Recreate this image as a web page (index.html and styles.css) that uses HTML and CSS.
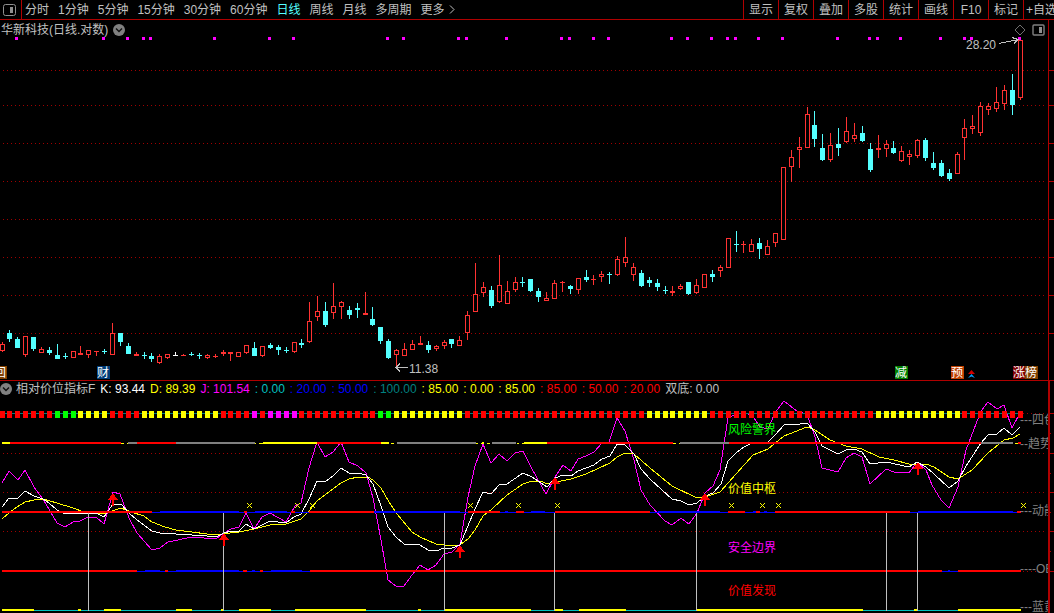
FILE: index.html
```html
<!DOCTYPE html>
<html lang="zh-CN">
<head>
    <meta charset="UTF-8">
    <meta name="viewport" content="width=device-width, initial-scale=1.0">
    <title>华新科技 日线</title>
    <link rel="stylesheet" href="styles.css">
</head>
<body>
    <header class="toolbar">
        <button class="layout-btn" aria-label="布局">
            <svg width="13" height="12" viewBox="0 0 13 12"><rect x="0.5" y="0.5" width="12" height="11" rx="2" fill="none" stroke="#909090"/><rect x="7" y="3" width="3" height="6" fill="#909090"/></svg>
        </button>
        <nav class="periods">
            <button>分时</button>
            <button>1分钟</button>
            <button>5分钟</button>
            <button>15分钟</button>
            <button>30分钟</button>
            <button>60分钟</button>
            <button class="active">日线</button>
            <button>周线</button>
            <button>月线</button>
            <button>多周期</button>
            <button class="more">更多
                <svg width="6" height="9" viewBox="0 0 6 9"><path d="M1 0.5L5 4.5L1 8.5" fill="none" stroke="#c0c0c0"/></svg>
            </button>
        </nav>
        <nav class="tools">
            <button>显示</button>
            <button>复权</button>
            <button>叠加</button>
            <button>多股</button>
            <button>统计</button>
            <button>画线</button>
            <button>F10</button>
            <button>标记</button>
            <button class="fav">+自选</button>
        </nav>
    </header>

    <main>
        <section class="panel price">
            <div class="panel-title over">
                <span>华新科技(日线.对数)</span>
                <button class="drop" aria-label="展开">
                    <svg width="12" height="12" viewBox="0 0 12 12"><circle cx="6" cy="6" r="6" fill="#808080"/><path d="M3 4.5L6 7.5L9 4.5" fill="none" stroke="#101010" stroke-width="1.4"/></svg>
                </button>
                <div class="corner">
                    <svg width="12" height="12" viewBox="0 0 12 12"><path d="M6 1L11 6L6 11L1 6Z" fill="none" stroke="#707070"/></svg>
                    <svg width="13" height="12" viewBox="0 0 13 12"><rect x="1" y="1" width="11" height="10" rx="1" fill="none" stroke="#808080" stroke-width="1.4"/><rect x="7" y="3" width="3" height="6" fill="#909090"/></svg>
                </div>
            </div>
            <svg class="chart" id="price" viewBox="0 20 1054 360"></svg>
        </section>

        <section class="panel indicator">
            <div class="panel-title">
                <button class="drop" aria-label="展开">
                    <svg width="12" height="12" viewBox="0 0 12 12"><circle cx="6" cy="6" r="6" fill="#808080"/><path d="M3 4.5L6 7.5L9 4.5" fill="none" stroke="#101010" stroke-width="1.4"/></svg>
                </button>
                <span>相对价位指标F</span>
                <span class="white">K: 93.44</span>
                <span class="yellow">D: 89.39</span>
                <span class="magenta">J: 101.54</span>
                <span class="cyan">: 0.00</span>
                <span class="blue">: 20.00</span>
                <span class="blue">: 50.00</span>
                <span class="teal">: 100.00</span>
                <span class="yellow">: 85.00</span>
                <span class="yellow">: 0.00</span>
                <span class="yellow">: 85.00</span>
                <span class="red">: 85.00</span>
                <span class="red">: 50.00</span>
                <span class="red">: 20.00</span>
                <span>双底: 0.00</span>
            </div>
            <svg class="chart" id="indicator" viewBox="0 397 1054 216"></svg>
        </section>
    </main>
    <script src="chart.js"></script>
</body>
</html>
```
FILE: styles.css
```css
body {
    margin: 0;
    background: #000;
    color: #c0c0c0;
    font-family: "Liberation Sans", "Noto Sans CJK SC", sans-serif;
    font-size: 12px;
    line-height: 16px;
    overflow: hidden;
}
button {
    background: none;
    border: none;
    padding: 0;
    color: inherit;
    font: inherit;
    white-space: nowrap;
    cursor: pointer;
}
button:hover {
    color: #fff;
}
.toolbar {
    display: flex;
    height: 19px;
    border-bottom: 1px solid #b00000;
}
.toolbar svg, .panel-title svg {
    display: block;
}
.layout-btn {
    flex: none;
    width: 22px;
    padding-left: 3px;
    border-right: 1px solid #b00000;
}
.periods {
    display: flex;
    gap: 9px;
    padding-left: 3px;
}
.periods .active {
    color: #54ffff;
}
.more {
    display: flex;
    align-items: center;
    gap: 4px;
}
.tools {
    display: flex;
    margin-left: auto;
}
.tools button {
    box-sizing: border-box;
    width: 35px;
    border-left: 1px solid #b00000;
}
.tools .fav {
    width: 31px;
    padding-left: 2px;
    overflow: hidden;
    text-align: left;
}
.panel {
    position: relative;
}
.price {
    border-bottom: 1px solid #b00000;
}
.chart {
    display: block;
    width: 100%;
    height: auto;
}
.indicator .chart {
    overflow: visible;
}
.panel-title {
    display: flex;
    align-items: center;
    gap: 5px;
    height: 16px;
    white-space: nowrap;
}
.panel-title.over {
    position: absolute;
    top: 2px;
    left: 1px;
    right: 9px;
}
.indicator .drop {
    margin-right: -1px;
}
.corner {
    display: flex;
    gap: 6px;
    margin-left: auto;
}
.white { color: #fff; }
.yellow { color: #ff0; }
.magenta { color: #f0f; }
.cyan { color: #00c0c0; }
.blue { color: #00f; }
.teal { color: #008080; }
.red { color: #f00; }

.crisp {
    shape-rendering: crispEdges;
}
.grid {
    stroke: #a00000;
    stroke-dasharray: 1 3;
}
.curve {
    fill: none;
    stroke-width: 1;
}
.chart text {
    fill: #c0c0c0;
    font-size: 12px;
}
.chart text.badge {
    fill: #fff;
}
.chart text.dim {
    fill: #808080;
}
.chart text.risk { fill: #0f0; }
.chart text.middle { fill: #ff0; }
.chart text.safe { fill: #f0f; }
.chart text.value { fill: #f00; }
```
FILE: chart.js
```javascript
const UP = '#ff3232';
const DOWN = '#54ffff';
const COLORS = { r: '#ff0000', y: '#ffff00', g: '#00ff00', m: '#ff00ff', b: '#0000ff', s: '#808080', c: '#00c0c0' };

// type, high, body top, body bottom, low (one bar per trading day)
const bars = `r342 344 350 351|c330 333 338 341|c337 339 347 347|r336 336 354 356|c337 337 348 350|r347 349 352 352
c347 350 352 354|c344 355 358 358|c353 356 356 358|r351 351 357 357|r346 353 354 354|r350 350 354 357|r351 351 351 355
c349 351 351 353|r323 333 354 354|c333 333 341 345|c343 346 353 353|r352 354 355 355|c352 355 355 358|c353 356 358 361
r354 356 362 363|r354 354 357 358|w352 355 355 355|r354 355 355 355|c352 354 354 355|c353 355 355 358|r354 355 357 358
r354 356 356 357|r350 352 353 355|r352 352 353 360|r352 352 356 356|r345 345 352 353|c342 348 355 355|r346 346 355 356
c343 345 347 348|c345 347 349 354|c347 350 350 352|r342 342 351 352|c339 343 344 347|r302 321 341 342|r296 311 316 320
c302 311 324 326|r283 306 312 318|r301 302 306 318|c306 310 314 318|c303 308 309 317|r292 313 314 314|c307 319 324 325
c327 327 340 343|c339 341 357 358|r349 350 354 366|r343 349 355 355|r340 344 349 349|r336 343 344 344|c341 345 349 352
r345 346 348 350|r340 342 345 348|c339 339 343 347|r336 340 345 345|r311 315 332 339|r263 294 311 311|r282 287 292 296
c286 290 305 307|r255 285 301 302|r281 291 303 303|r277 282 289 291|c277 282 282 286|c279 279 290 291|c288 291 296 301
r292 298 300 300|r280 283 298 298|r281 282 282 291|c285 286 288 293|r278 278 289 293|c270 277 279 281|r275 279 279 284
r271 274 276 281|c272 274 274 283|r256 259 274 275|r237 257 262 266|r263 267 274 280|c270 273 285 286|c277 280 282 286
c279 283 286 290|c286 290 290 293|r286 291 292 295|r284 286 288 289|c282 282 293 294|r279 285 292 293|r274 274 287 287
c270 274 276 281|r265 267 270 276|r238 238 267 267|c231 244 244 251|r241 244 244 252|r239 244 251 251|c238 243 248 258
r240 246 254 254|r233 233 242 246|r167 167 239 239|r150 157 166 181|r137 147 149 167|r107 114 147 147|c111 125 138 146
c134 148 159 160|r133 145 159 161|c128 144 147 155|r117 131 141 142|r123 135 138 141|c126 133 140 141|c143 149 169 171
r135 148 149 157|r140 144 148 156|c141 148 152 153|r146 151 160 161|r150 154 156 164|r139 140 155 157|c138 140 157 160
c152 163 167 169|c160 163 175 176|c169 173 178 180|r152 154 173 173|r119 128 137 159|r115 126 128 133|r102 106 132 135
r103 106 109 114|r87 102 108 111|r85 90 103 109|c74 90 104 114|r40 40 97 99`.split(/[|\n]/);

const signals = [16, 103, 127, 143, 150, 214, 269, 293, 387, 403, 458, 466, 506, 561, 569, 593, 608, 671, 687,
    711, 727, 735, 758, 782, 837, 869, 877, 900, 940, 964, 971, 1019];

// colour and how many bars in a row carry it
const blocks = 'r7 g3 y4 r4 y10 r4 m1 r1 m4 r10 g2 y9 r23 y8 r21 y11 r8';

// status lines: colour + end x, upper case means the thin variant, "-" leaves a gap
const strips = [
    [442, 'y10 r121 Y124 -127 Y128 s137 r176 s255 Y256 -259 Y263 y317 r381 y389 -391 Y394 -397 s476 Y478 -481 Y482 y484 -487 Y490 -492 s516 -517 Y519 -522 Y524 y547 r673 Y676 -679 Y680 s729 r981 s1013 -1015 Y1018 r1021'],
    [511, 'r152 B160 b239 B244 r247 B255 b287 B291 r295 B309 r374 b460 B468 r500 B505 b508 B516 r524 B531 b545 B555 r650 B658 b720 B728 r745 B753 b756 r760 B764 b767 B775 r910 B918 b1013 B1017 r1021'],
    [570, 'r137 B145 b160 B165 r168 B176 b239 B243 r247 B252 b255 B260 r263 B271 b302 B310 r942 B948 b950 B958 r1021'],
    [609, 'y34 C78 y81 C104 y121 C176 y192 C221 y224 C239 y271 C295 y366 C418 y421 C445 y531 C555 y563 C579 y626 C697 y863 C914 y918 C958 y1021']
];

const kLine = '2,507 9,498 18,498 25,491 34,496 43,499 49,503 57,510 65,514 73,513 84,514 96,513 104,517 113,504 121,504 129,513 137,520 144,525 152,531 160,533 176,534 192,535 207,536 218,536 224,533 231,531 239,531 246,524 254,529 270,521 286,523 294,517 301,514 309,499 317,481 325,482 333,476 341,468 349,473 358,473 366,475 373,484 381,506 388,527 396,537 404,544 420,545 428,550 436,551 444,548 452,548 460,545 475,509 483,492 491,494 499,485 507,484 523,473 532,477 547,487 555,478 563,475 571,476 578,471 594,465 602,459 610,456 617,444 625,445 634,454 641,469 650,479 672,499 681,501 689,505 697,503 705,496 713,493 721,484 728,461 736,453 744,447 752,443 767,443 775,435 784,425 800,424 807,423 815,432 822,446 838,454 846,450 854,449 862,452 870,464 886,462 909,467 917,462 926,467 934,474 949,488 958,481 966,466 981,443 988,435 997,434 1004,428 1012,435 1020,427';
const dLine = '2,519 9,513 17,507 25,502 34,500 43,499 57,503 73,508 84,512 104,514 121,508 131,512 144,516 152,522 165,527 176,530 192,532 207,534 222,534 239,532 254,529 270,525 286,524 301,519 309,511 317,501 341,483 349,479 358,477 368,477 373,480 381,488 389,502 397,514 412,532 420,537 436,544 452,546 460,545 468,539 475,530 483,516 492,509 507,495 523,484 532,481 540,481 548,484 556,482 571,479 586,474 610,463 617,457 625,453 634,454 650,468 672,486 697,498 705,497 720,492 736,474 753,455 768,449 784,436 807,427 815,430 830,440 846,446 862,449 879,457 894,460 909,464 926,464 934,467 949,477 958,479 972,470 988,453 1004,440 1013,438 1020,434';
const jLine = '2,483 9,471 18,480 25,470 34,487 43,499 57,523 65,527 73,522 80,521 88,517 96,517 104,524 108,510 113,492 120,494 129,518 137,533 152,550 160,548 168,542 192,537 216,539 224,533 231,529 239,527 246,513 254,529 262,517 270,513 286,522 295,506 301,503 309,468 317,442 325,457 333,452 341,442 349,462 358,466 366,473 373,498 381,540 388,580 396,586 404,586 412,575 420,565 428,570 436,565 444,554 452,552 460,544 468,497 475,466 483,444 491,463 499,454 507,461 515,453 523,451 532,469 546,494 555,477 563,465 571,471 578,459 586,456 594,452 602,443 609,442 617,418 625,431 634,460 641,490 650,505 665,521 672,525 681,518 689,524 697,513 705,493 713,486 720,470 728,418 736,414 744,413 752,415 760,427 768,429 775,413 784,401 798,412 807,414 815,437 822,468 838,472 846,458 854,453 862,457 870,484 886,469 894,472 909,473 917,462 926,470 932,485 941,500 949,508 958,487 966,450 981,411 988,402 997,409 1004,405 1012,428 1020,413';

function barX(i) {
    return Math.floor(2.01 + 7.893 * i);
}

function rect(x, y, w, h, fill) {
    return `<rect x="${x}" y="${y}" width="${w}" height="${h}" fill="${fill}"/>`;
}

function label(x, y, text, cls = '') {
    return `<text x="${x}" y="${y}" class="${cls}">${text}</text>`;
}

function grid(rows, from = 3) {
    return rows.map(y => `<path class="grid" d="M${from} ${y}.5H1046"/>`).join('');
}

function ticks(rows, x, w) {
    return rows.map(y => rect(x, y, w, 1, '#b00000')).join('');
}

function candle(bar, i) {
    const type = bar[0];
    const [high, top, bottom, low] = bar.slice(1).split(' ').map(Number);
    const x = barX(i);
    const color = type === 'r' ? UP : type === 'c' ? DOWN : '#ffffff';
    let out = rect(x, high, 1, low - high + 1, color);
    out += rect(x - 2, top, 5, bottom - top + 1, color);
    if (type === 'r' && bottom - top > 1) {
        out += rect(x - 1, top + 1, 3, bottom - top - 1, '#000');
    }
    return out;
}

function badge(x, text, fill) {
    return rect(x, 366, 13, 13, fill) + label(x, 377, text, 'badge');
}

function drawPrice() {
    const rows = [70, 105, 143, 181, 219, 257, 295, 333];
    let out = '<g class="crisp">' + grid(rows) + rect(1048, 20, 1, 360, '#b00000') + ticks(rows, 1049, 5);
    out += bars.map(candle).join('');
    out += signals.map(x => rect(x - 1, 37, 3, 3, COLORS.m)).join('');
    out += '</g>';
    out += '<g class="crisp" fill="none" stroke="#c0c0c0"><path d="M999 43.5L1018 39.5M1012 37.5L1018 39.5L1014 43.5"/><path d="M396 367.5H408M400 363.5L396 367.5L400 371.5"/></g>';
    out += label(966, 49, '28.20') + label(409, 373, '11.38');
    out += badge(-6, '回', '#804000') + badge(97, '财', '#003c78') + badge(895, '减', '#008000');
    out += badge(951, '预', '#c04000') + badge(1013, '涨', '#800000') + badge(1025, '榜', '#804000');
    out += '<path d="M968 374L971.5 370L975 374Z" fill="#d00000"/>';
    out += '<path d="M968 378L971.5 374L975 378L971.5 376.5Z" fill="#00a0ff"/>';
    document.getElementById('price').innerHTML = out;
}

function drawBlocks() {
    let i = 0;
    let out = rect(0, 413, 1020, 1, '#008080');
    for (const run of blocks.split(' ')) {
        for (let n = 0; n < Number(run.slice(1)); n++, i++) {
            out += rect(barX(i) - 2, 411, 5, 7, COLORS[run[0]]);
        }
    }
    return out;
}

function drawStrip([y, runs]) {
    let x = 2;
    let out = '';
    for (const run of runs.split(' ')) {
        const end = Number(run.slice(1));
        const key = run[0].toLowerCase();
        const thin = run[0] !== key;
        if (key !== '-') {
            out += rect(x, thin ? y + 1 : y, end - x, thin ? 1 : 2, COLORS[key]);
        }
        x = end;
    }
    return out;
}

function cross(x, y) {
    let out = '';
    for (let d = -2; d <= 2; d++) {
        out += rect(x + d, y + d, 1, 1, COLORS.y) + rect(x + d, y - d, 1, 1, COLORS.y);
    }
    return out;
}

function drawIndicator() {
    let out = '<g class="crisp">' + grid([453, 492, 531]) + grid([413, 571], 1023);
    out += rect(1048, 381, 2, 232, '#b00000') + ticks([413, 453, 492, 531, 571], 1050, 4) + ticks([433, 473, 512, 551], 1050, 1);
    out += `<polyline class="curve" stroke="#ff00ff" points="${jLine}"/>`;
    out += `<polyline class="curve" stroke="#ffff00" points="${dLine}"/>`;
    out += `<polyline class="curve" stroke="#ffffff" points="${kLine}"/>`;
    out += drawBlocks();
    out += strips.map(drawStrip).join('');
    out += [88, 223, 444, 554, 696, 886, 917].map(x => rect(x, 513, 1, 98, '#c0c0c0')).join('');
    // buy arrows
    for (const [x, y] of [[112, 493], [223, 533], [459, 545], [554, 477], [704, 493], [917, 462]]) {
        out += `<path fill="#ff0000" d="M${x + 1} ${y}l5 7h-4v6h-2v-6h-4z"/>`;
    }
    out += [249, 297, 312, 470, 518, 557, 731, 762, 778, 1023].map(x => cross(x, 505)).join('');
    out += '</g>';
    out += label(728, 434, '风险警界', 'risk');
    out += label(728, 493, '价值中枢', 'middle');
    out += label(728, 552, '安全边界', 'safe');
    out += label(728, 595, '价值发现', 'value');
    out += '<clipPath id="plot"><rect x="0" y="397" width="1048" height="216"/></clipPath><g clip-path="url(#plot)">';
    out += label(1020, 424, '---四色', 'dim') + label(1020, 448, '--趋势', 'dim');
    out += label(1020, 515, '---动能', 'dim') + label(1020, 573, '----OBV', 'dim');
    out += label(1020, 611, '---蓝黄', 'dim') + '</g>';
    document.getElementById('indicator').innerHTML = out;
}

drawPrice();
drawIndicator();
```
